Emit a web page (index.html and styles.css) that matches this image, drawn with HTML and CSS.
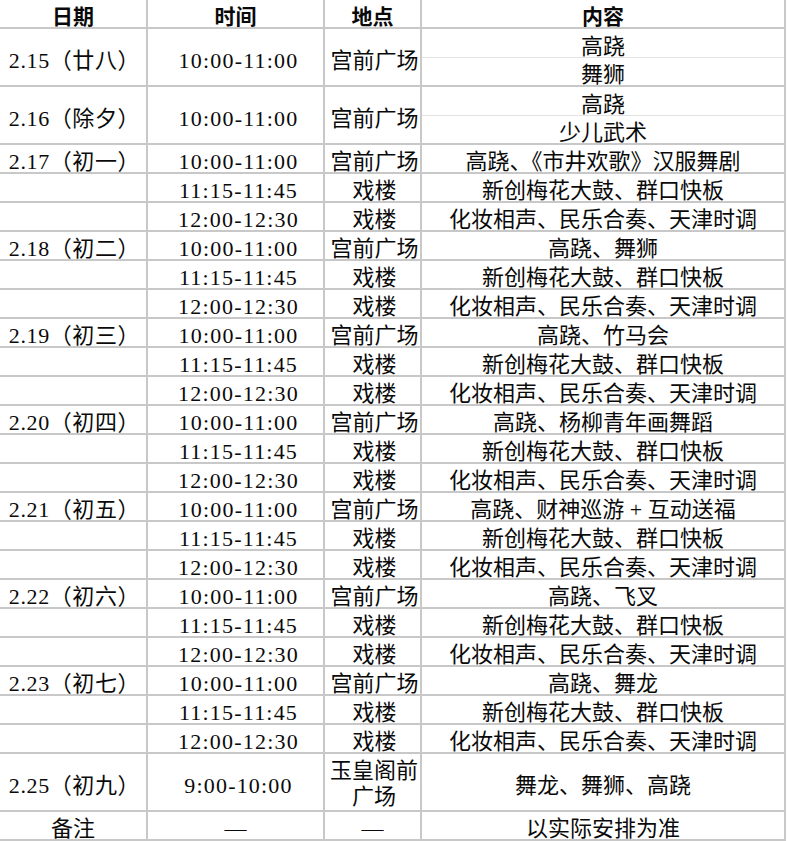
FILE: index.html
```html
<!DOCTYPE html>
<html lang="zh-CN">
<head>
<meta charset="utf-8">
<link rel="stylesheet" href="styles.css">
</head>
<body>
<div class="sheet">
  <div class="cell head">日期</div>
  <div class="cell head">时间</div>
  <div class="cell head">地点</div>
  <div class="cell head">内容</div>

  <div class="cell date span2">2.15（廿八）</div>
  <div class="cell time span2">10:00-11:00</div>
  <div class="cell place span2">宫前广场</div>
  <div class="cell split span2"><div class="sub top">高跷</div><div class="sub">舞狮</div></div>

  <div class="cell date span2">2.16（除夕）</div>
  <div class="cell time span2">10:00-11:00</div>
  <div class="cell place span2">宫前广场</div>
  <div class="cell split span2"><div class="sub top">高跷</div><div class="sub">少儿武术</div></div>

  <div class="cell date">2.17（初一）</div><div class="cell time">10:00-11:00</div><div class="cell place">宫前广场</div><div class="cell">高跷、《市井欢歌》汉服舞剧</div>
  <div class="cell"></div><div class="cell time">11:15-11:45</div><div class="cell place">戏楼</div><div class="cell">新创梅花大鼓、群口快板</div>
  <div class="cell"></div><div class="cell time">12:00-12:30</div><div class="cell place">戏楼</div><div class="cell">化妆相声、民乐合奏、天津时调</div>

  <div class="cell date">2.18（初二）</div><div class="cell time">10:00-11:00</div><div class="cell place">宫前广场</div><div class="cell">高跷、舞狮</div>
  <div class="cell"></div><div class="cell time">11:15-11:45</div><div class="cell place">戏楼</div><div class="cell">新创梅花大鼓、群口快板</div>
  <div class="cell"></div><div class="cell time">12:00-12:30</div><div class="cell place">戏楼</div><div class="cell">化妆相声、民乐合奏、天津时调</div>

  <div class="cell date">2.19（初三）</div><div class="cell time">10:00-11:00</div><div class="cell place">宫前广场</div><div class="cell">高跷、竹马会</div>
  <div class="cell"></div><div class="cell time">11:15-11:45</div><div class="cell place">戏楼</div><div class="cell">新创梅花大鼓、群口快板</div>
  <div class="cell"></div><div class="cell time">12:00-12:30</div><div class="cell place">戏楼</div><div class="cell">化妆相声、民乐合奏、天津时调</div>

  <div class="cell date">2.20（初四）</div><div class="cell time">10:00-11:00</div><div class="cell place">宫前广场</div><div class="cell">高跷、杨柳青年画舞蹈</div>
  <div class="cell"></div><div class="cell time">11:15-11:45</div><div class="cell place">戏楼</div><div class="cell">新创梅花大鼓、群口快板</div>
  <div class="cell"></div><div class="cell time">12:00-12:30</div><div class="cell place">戏楼</div><div class="cell">化妆相声、民乐合奏、天津时调</div>

  <div class="cell date">2.21（初五）</div><div class="cell time">10:00-11:00</div><div class="cell place">宫前广场</div><div class="cell">高跷、财神巡游 + 互动送福</div>
  <div class="cell"></div><div class="cell time">11:15-11:45</div><div class="cell place">戏楼</div><div class="cell">新创梅花大鼓、群口快板</div>
  <div class="cell"></div><div class="cell time">12:00-12:30</div><div class="cell place">戏楼</div><div class="cell">化妆相声、民乐合奏、天津时调</div>

  <div class="cell date">2.22（初六）</div><div class="cell time">10:00-11:00</div><div class="cell place">宫前广场</div><div class="cell">高跷、飞叉</div>
  <div class="cell"></div><div class="cell time">11:15-11:45</div><div class="cell place">戏楼</div><div class="cell">新创梅花大鼓、群口快板</div>
  <div class="cell"></div><div class="cell time">12:00-12:30</div><div class="cell place">戏楼</div><div class="cell">化妆相声、民乐合奏、天津时调</div>

  <div class="cell date">2.23（初七）</div><div class="cell time">10:00-11:00</div><div class="cell place">宫前广场</div><div class="cell">高跷、舞龙</div>
  <div class="cell"></div><div class="cell time">11:15-11:45</div><div class="cell place">戏楼</div><div class="cell">新创梅花大鼓、群口快板</div>
  <div class="cell"></div><div class="cell time">12:00-12:30</div><div class="cell place">戏楼</div><div class="cell">化妆相声、民乐合奏、天津时调</div>

  <div class="cell date span2">2.25（初九）</div>
  <div class="cell time span2">9:00-10:00</div>
  <div class="cell place span2 wrap">玉皇阁前<br>广场</div>
  <div class="cell span2">舞龙、舞狮、高跷</div>

  <div class="cell">备注</div>
  <div class="cell">—</div>
  <div class="cell">—</div>
  <div class="cell">以实际安排为准</div>
</div>
</body>
</html>
```
FILE: styles.css
```css
html, body {
  margin: 0;
  padding: 0;
  background: #ffffff;
}

.sheet {
  display: grid;
  grid-template-columns: 146px 175px 95px 362px;
  grid-auto-rows: 27px;
  gap: 2px;
  width: max-content;
  padding: 0 2px 2px 0;
  background: #c8c8c8;
  font-family: "Liberation Serif", "Noto Sans CJK SC", serif;
  font-size: 22px;
  color: #0a0a0a;
}

.cell {
  box-sizing: border-box;
  background: #ffffff;
  display: flex;
  align-items: center;
  justify-content: center;
  white-space: nowrap;
  line-height: 21px;
  padding-top: 6px;
}

.head {
  font-family: "Noto Sans CJK SC", sans-serif;
  font-weight: 700;
  font-size: 21px;
  line-height: 23px;
  padding-top: 4px;
}

.time {
  letter-spacing: 1.2px;
  padding-left: 6px;
}

.date {
  letter-spacing: 0.6px;
  padding-left: 3px;
}

.place {
  padding-left: 4px;
}

.span2 {
  grid-row: span 2;
}

.split {
  flex-direction: column;
  align-items: stretch;
  padding-top: 0;
}

.sub {
  box-sizing: border-box;
  height: 27px;
  padding-top: 6px;
  line-height: 21px;
  display: flex;
  align-items: center;
  justify-content: center;
}

.sub.top {
  height: 29px;
  border-bottom: 1px solid #e2e2e2;
}

.wrap {
  text-align: center;
  line-height: 26px;
  padding: 4px 0 0 3px;
}
```
